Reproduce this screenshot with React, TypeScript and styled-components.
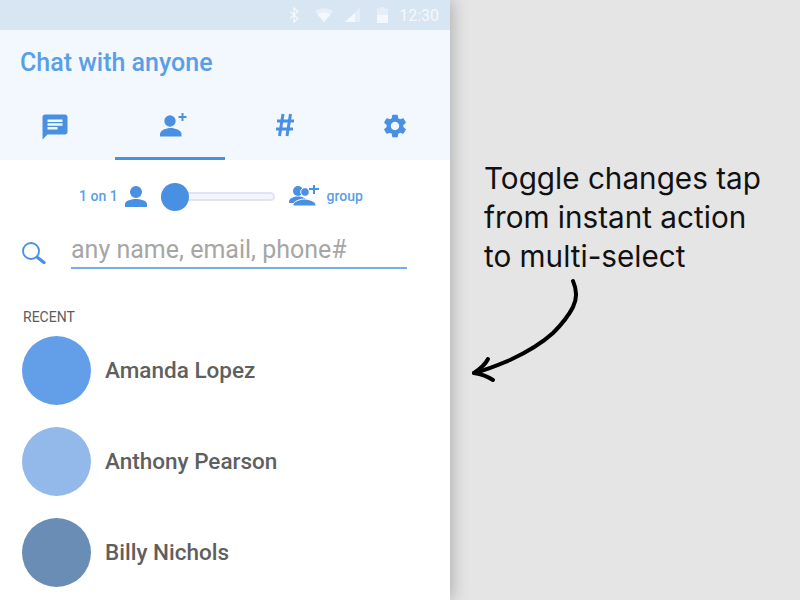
import React from 'react';
import styled, { createGlobalStyle } from 'styled-components';

const Global = createGlobalStyle`
  html, body {
    margin: 0;
    padding: 0;
    width: 800px;
    height: 600px;
    overflow: hidden;
    background: #e5e5e5;
    font-family: Roboto, sans-serif;
  }
`;

const Page = styled.div`
  display: flex;
  width: 800px;
  height: 600px;
  overflow: hidden;
`;

const Phone = styled.div`
  width: 450px;
  height: 600px;
  flex: none;
  background: #fff;
  box-shadow: 2px 0 16px rgba(0, 0, 0, 0.25);
`;

const StatusBar = styled.div`
  height: 30px;
  background: #d8e5f3;
  display: flex;
  align-items: center;
  justify-content: flex-end;
  padding-right: 11px;
  color: #f4f8fd;
  font-size: 16px;
`;

const StatusIcon = styled.svg<{ $gap: number }>`
  display: block;
  margin-right: ${p => p.$gap}px;
`;

const Header = styled.header`
  height: 130px;
  background: #f3f8ff;
  display: flex;
  flex-direction: column;
  justify-content: space-between;
`;

const Title = styled.h1`
  margin: 0;
  padding: 19px 0 0 20px;
  font-size: 25px;
  line-height: 28px;
  font-weight: 500;
  color: #5a9fe6;
`;

const Tabs = styled.div`
  display: flex;
  gap: 6px;
`;

const Tab = styled.div<{ $active?: boolean; $tight?: boolean }>`
  width: 110px;
  height: 55px;
  box-sizing: border-box;
  display: flex;
  justify-content: center;
  padding-top: 7px;
  margin-left: ${p => (p.$tight ? -5 : 0)}px;
  border-bottom: 3px solid ${p => (p.$active ? '#4a90e2' : 'transparent')};
`;

const HashIcon = styled.svg`
  display: block;
  margin-top: 1px;
`;

const Mode = styled.div`
  display: flex;
  align-items: center;
  height: 72px;
  padding-left: 79px;
  color: #5a9fe6;
  font-size: 14px;
  font-weight: 500;
`;

const ModeIcon = styled.svg<{ $left: number }>`
  display: block;
  margin-left: ${p => p.$left}px;
`;

const SliderTrack = styled.div`
  position: relative;
  width: 100px;
  height: 9px;
  margin-left: 28px;
  box-sizing: border-box;
  background: #f5f6fc;
  border: 2px solid #dfe3f5;
  border-radius: 5px;
`;

const Thumb = styled.div`
  position: absolute;
  left: -16px;
  top: -11px;
  width: 28px;
  height: 28px;
  border-radius: 50%;
  background: #4a90e2;
`;

const GroupLabel = styled.span`
  margin-left: 8px;
`;

const Search = styled.div`
  display: flex;
  align-items: flex-start;
  padding: 9px 0 0 22px;
`;

const SearchInput = styled.div`
  width: 336px;
  height: 26px;
  margin-left: 23px;
  border-bottom: 2px solid #74ade9;
  color: #a6a6a6;
  font-size: 25px;
  line-height: 18px;
`;

const SectionLabel = styled.div`
  margin: 40px 0 0 23px;
  font-size: 14px;
  line-height: 16px;
  color: #5c5c5c;
`;

const List = styled.div`
  display: flex;
  flex-direction: column;
  gap: 22px;
  padding: 11px 0 0 22px;
`;

const Row = styled.div`
  display: flex;
  align-items: center;
`;

const Avatar = styled.div<{ $color: string }>`
  width: 69px;
  height: 69px;
  border-radius: 50%;
  background: ${p => p.$color};
`;

const Name = styled.div`
  margin-left: 14px;
  font-size: 22.5px;
  line-height: 26px;
  padding-bottom: 1px;
  font-weight: 500;
  color: #5f5f5f;
`;

const Note = styled.aside`
  flex: 1;
  padding: 159px 0 0 34px;
`;

const NoteText = styled.p`
  margin: 0;
  font-family: Inter, sans-serif;
  font-size: 29.7px;
  line-height: 39px;
  color: #111;
`;

const Arrow = styled.svg`
  display: block;
  margin: -1px 0 0 -24px;
`;

const BLUE = '#4a90e2';

const people = [
  { name: 'Amanda Lopez', color: '#639ee8' },
  { name: 'Anthony Pearson', color: '#93b9ea' },
  { name: 'Billy Nichols', color: '#6a8db5' },
];

const personPath = 'M11 1a6 6 0 1 1 0 12 6 6 0 0 1 0-12zM0 22v-3c0-3.6 7-5 11-5s11 1.4 11 5v3H0z';

const App = () => (
  <Page>
    <Global />
    <Phone>
      <StatusBar>
        <StatusIcon $gap={16} width="10" height="16" viewBox="0 0 10 16" fill="none" stroke="#f4f8fd" strokeWidth="1.3">
          <path d="M1 4.5l8 7L5 15V1l4 3.5-8 7" />
        </StatusIcon>
        <StatusIcon $gap={12} width="18" height="14" viewBox="0 0 18 14" fill="#f4f8fd">
          <path d="M0 3.5C5-.8 13-.8 18 3.5L9 14z" opacity=".55" />
          <path d="M2.6 6.6c3.7-2.8 9.1-2.8 12.8 0L9 14z" />
        </StatusIcon>
        <StatusIcon $gap={16} width="16" height="14" viewBox="0 0 16 14" fill="#f4f8fd">
          <path d="M0 14L15 0v14z" opacity=".45" />
          <path d="M0 14l10-9.3V14z" />
        </StatusIcon>
        <StatusIcon $gap={11} width="11" height="16" viewBox="0 0 11 16" fill="#f4f8fd">
          <path d="M3.5 0h4v1.5H11V16H0V1.5h3.5z" opacity=".5" />
          <path d="M0 8h11v8H0z" />
        </StatusIcon>
        12:30
      </StatusBar>
      <Header>
        <Title>Chat with anyone</Title>
        <Tabs>
          <Tab>
            <svg width="30" height="30" viewBox="0 0 24 24" fill={BLUE}>
              <path d="M20 2H4c-1.1 0-1.99.9-1.99 2L2 22l4-4h14c1.1 0 2-.9 2-2V4c0-1.1-.9-2-2-2zM6 9h12v2H6V9zm8 5H6v-2h8v2zm4-6H6V6h12v2z" />
            </svg>
          </Tab>
          <Tab $active>
            <svg width="34" height="28" viewBox="0 0 34 28" fill={BLUE}>
              <circle cx="17" cy="9" r="5.7" />
              <path d="M7 24.500v-2.500c0-3.800 6.500-6 10.700-6s10.800 2.200 10.800 6v2.500H7z" />
              <path d="M28.500 1h2v3h3v2h-3v3h-2V6h-3V4h3z" />
            </svg>
          </Tab>
          <Tab>
            <HashIcon width="20" height="24" viewBox="0 0 20 24" fill="none" stroke={BLUE} strokeWidth="3">
              <path d="M8 1L4.500 23M15.500 1L12 23M2 8h17M1 16h17" />
            </HashIcon>
          </Tab>
          <Tab $tight>
            <svg width="28" height="28" viewBox="0 0 24 24" fill={BLUE}>
              <path d="M19.14 12.94c.04-.3.06-.61.06-.94 0-.32-.02-.64-.07-.94l2.03-1.58c.18-.14.23-.41.12-.61l-1.92-3.32c-.12-.22-.37-.29-.59-.22l-2.39.96c-.5-.38-1.03-.7-1.62-.94l-.36-2.54c-.04-.24-.24-.41-.48-.41h-3.84c-.24 0-.43.17-.47.41l-.36 2.54c-.59.24-1.13.57-1.62.94l-2.39-.96c-.22-.08-.47 0-.59.22L2.74 8.87c-.12.21-.08.47.12.61l2.03 1.58c-.05.3-.09.63-.09.94s.02.64.07.94l-2.03 1.58c-.18.14-.23.41-.12.61l1.92 3.32c.12.22.37.29.59.22l2.39-.96c.5.38 1.03.7 1.62.94l.36 2.54c.05.24.24.41.48.41h3.84c.24 0 .44-.17.47-.41l.36-2.54c.59-.24 1.13-.56 1.62-.94l2.39.96c.22.08.47 0 .59-.22l1.92-3.32c.12-.22.07-.47-.12-.61l-2.01-1.58zM12 15.6c-1.98 0-3.6-1.62-3.6-3.6s1.62-3.6 3.6-3.6 3.6 1.62 3.6 3.6-1.62 3.6-3.6 3.6z" />
            </svg>
          </Tab>
        </Tabs>
      </Header>
      <Mode>
        1 on 1
        <ModeIcon $left={7} width="22" height="22" viewBox="0 0 22 22" fill={BLUE}>
          <path d={personPath} />
        </ModeIcon>
        <SliderTrack>
          <Thumb />
        </SliderTrack>
        <ModeIcon $left={14} width="30" height="22" viewBox="0 0 30 22" fill={BLUE}>
          <circle cx="9" cy="6" r="5" />
          <path d="M0 18v-1.500c0-3 4.500-5 9-5s9 2 9 5V18H0z" />
          <circle cx="16" cy="7" r="4.300" stroke="#fff" />
          <path d="M4 21v-1c0-3.600 7.500-6 11.500-6S27 16.400 27 20v1H4z" stroke="#fff" />
          <path d="M24 0h2v3h4v2h-4v4h-2V5h-4V3h4z" />
        </ModeIcon>
        <GroupLabel>group</GroupLabel>
      </Mode>
      <Search>
        <svg width="26" height="24" viewBox="0 0 26 24" fill="none" stroke={BLUE}>
          <circle cx="9" cy="10" r="8" strokeWidth="1.8" />
          <path d="M15.500 16.500l6.500 5" strokeWidth="3.400" strokeLinecap="round" />
        </svg>
        <SearchInput>any name, email, phone#</SearchInput>
      </Search>
      <SectionLabel>RECENT</SectionLabel>
      <List>
        {people.map(person => (
          <Row key={person.name}>
            <Avatar $color={person.color} />
            <Name>{person.name}</Name>
          </Row>
        ))}
      </List>
    </Phone>
    <Note>
      <NoteText>
        Toggle changes tap
        <br />
        from instant action
        <br />
        to multi-select
      </NoteText>
      <Arrow width="125" height="115" viewBox="0 0 125 115" fill="none" stroke="#000" strokeLinecap="round" strokeLinejoin="round">
        <path d="M113 6c4 9 4 18 0 26-5 10-12 18-20 26-12 11-28 20-43 27-12 5-24 10-36 13" strokeWidth="4" />
        <path d="M28 84c-3 6-8 10-14 14 6 1 13 3 19 7" strokeWidth="4" />
      </Arrow>
    </Note>
  </Page>
);

export default App;
